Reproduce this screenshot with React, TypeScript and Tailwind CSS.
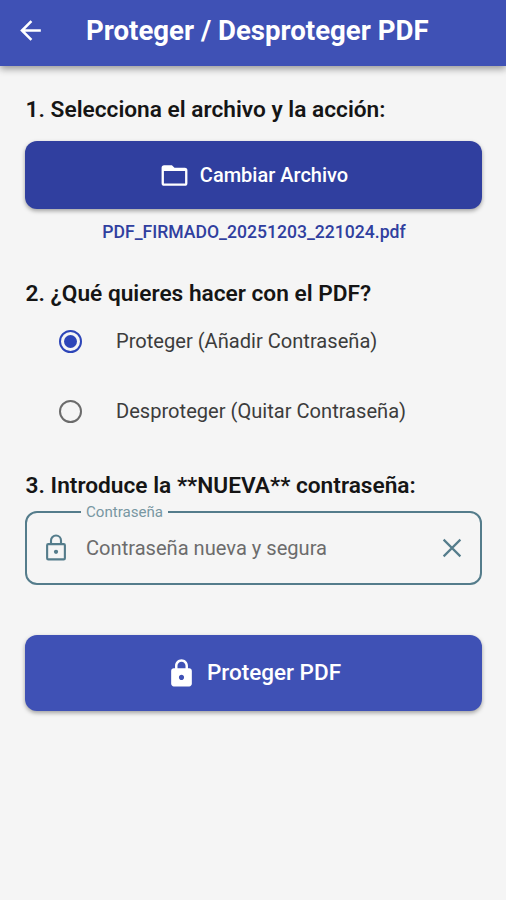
import { useState } from "react";
import { MdArrowBack, MdLock } from "react-icons/md";

const actions = [
  { id: "protect", label: "Proteger (Añadir Contraseña)" },
  { id: "unprotect", label: "Desproteger (Quitar Contraseña)" },
];

function Radio({ checked }: { checked: boolean }) {
  return (
    <span
      className={`flex size-[23px] shrink-0 items-center justify-center rounded-full border-[2.5px] ${
        checked ? "border-[#2d45b8]" : "border-[#6b6b6b]"
      }`}
    >
      {checked && <span className="size-[13px] rounded-full bg-[#2d45b8]" />}
    </span>
  );
}

function LockOutline() {
  return (
    <svg viewBox="0 0 24 24" className="size-[30px] shrink-0" fill="none" stroke="#547c8b" strokeWidth="1.7">
      <rect x="4.9" y="8.9" width="14.2" height="12.2" rx="0.9" />
      <path d="M8 8.8V6a4 4 0 0 1 8 0v2.8" />
      <circle cx="12" cy="15" r="1.7" fill="#547c8b" stroke="none" />
    </svg>
  );
}

function Folder() {
  return (
    <svg viewBox="0 0 24 24" className="size-[31px] shrink-0" fill="currentColor">
      <path
        fillRule="evenodd"
        d="M4 4h6l2 2h8a2 2 0 0 1 2 2v10a2 2 0 0 1-2 2H4a2 2 0 0 1-2-2V6a2 2 0 0 1 2-2ZM3.8 8.6v9.6h16.4V8.6Z"
      />
    </svg>
  );
}

function Close() {
  return (
    <svg viewBox="0 0 24 24" className="size-[30px]" fill="none" stroke="#547c8b" strokeWidth="1.7">
      <path d="m5.3 5.3 13.4 13.4M18.7 5.3 5.3 18.7" />
    </svg>
  );
}

export default function App() {
  const [action, setAction] = useState("protect");
  const [password, setPassword] = useState("");

  return (
    <div className="min-h-screen w-full bg-[#f5f5f5] font-['Roboto',sans-serif] text-[#151515]">
      <header className="flex h-[65.5px] items-center bg-[#3f51b5] pb-[5px] pl-[15px] text-white shadow-[0_3px_7px_rgba(0,0,0,0.38)]">
        <button aria-label="Volver">
          <MdArrowBack className="size-[31px]" />
        </button>
        <h1 className="ml-[40px] whitespace-nowrap pt-[2px] text-[27.6px] font-bold leading-[32px]">
          Proteger / Desproteger PDF
        </h1>
      </header>

      <main className="flex flex-col px-[25px] pt-[30.5px]">
        <h2 className="ml-[0.6px] whitespace-nowrap text-[22.68px] font-semibold leading-[28px]">
          1. Selecciona el archivo y la acción:
        </h2>
        <button className="mt-[17px] flex h-[68px] w-[457px] items-center justify-center gap-[10px] rounded-[12px] bg-[#303f9f] text-[20px] font-medium text-white shadow-[0_2px_4px_rgba(0,0,0,0.35)]">
          <Folder />
          Cambiar Archivo
        </button>
        <p className="mt-[11px] pl-[2px] text-center text-[17.6px] font-medium leading-[24px] text-[#303f9f]">
          PDF_FIRMADO_20251203_221024.pdf
        </p>

        <h2 className="ml-[0.6px] mt-[36px] whitespace-nowrap text-[22.68px] font-semibold leading-[28px]">
          2. ¿Qué quieres hacer con el PDF?
        </h2>
        <div role="radiogroup" className="-mt-[2px]">
          {actions.map((item) => (
            <button
              key={item.id}
              role="radio"
              aria-checked={action === item.id}
              onClick={() => setAction(item.id)}
              className="flex h-[70px] w-full items-center gap-[34px] pl-[34px] text-left text-[20.1px] text-[#3c3c3c]"
            >
              <Radio checked={action === item.id} />
              <span className="whitespace-nowrap">{item.label}</span>
            </button>
          ))}
        </div>

        <h2 className="ml-[0.6px] mt-[26px] whitespace-nowrap text-[22.68px] font-semibold leading-[28px]">
          3. Introduce la **NUEVA** contraseña:
        </h2>
        <div className="relative mt-[11px] flex h-[74px] w-[457px] items-center rounded-[12px] border-[2.5px] border-[#547c8b] pl-[14px] pr-[13px]">
          <label
            htmlFor="password"
            className="absolute left-[54px] top-[-11px] bg-[#f5f5f5] px-[5px] text-[15.1px] leading-[20px] text-[#7897a2]"
          >
            Contraseña
          </label>
          <LockOutline />
          <input
            id="password"
            type="password"
            value={password}
            onChange={(e) => setPassword(e.target.value)}
            placeholder="Contraseña nueva y segura"
            className="ml-[15px] min-w-0 flex-1 bg-transparent text-[20.1px] outline-none placeholder:text-[#6c6c6c]"
          />
          <button aria-label="Borrar" onClick={() => setPassword("")}>
            <Close />
          </button>
        </div>

        <button className="mt-[50px] flex h-[75.5px] w-[457px] items-center justify-center gap-[10px] rounded-[12px] bg-[#3f51b5] pt-px text-[22.5px] font-medium text-white shadow-[0_2px_4px_rgba(0,0,0,0.35)]">
          <MdLock className="size-[31px]" />
          Proteger PDF
        </button>
      </main>
    </div>
  );
}
